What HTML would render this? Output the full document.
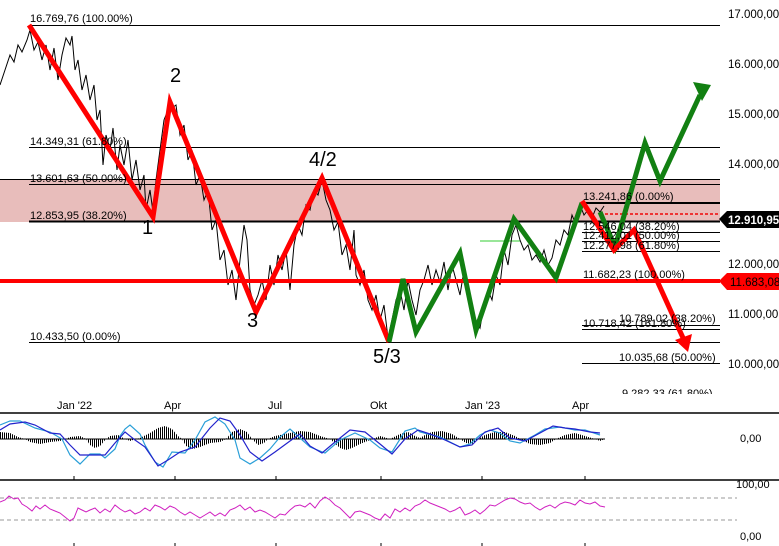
<!DOCTYPE html>
<html><head><meta charset="utf-8"><style>
body{margin:0;background:#fff;}
svg{display:block;font-family:"Liberation Sans",sans-serif;}
</style></head><body>
<svg width="779" height="546" viewBox="0 0 779 546" xmlns="http://www.w3.org/2000/svg">
<defs>
<pattern id="bars" width="2" height="10" patternUnits="userSpaceOnUse"><rect x="0" y="0" width="1" height="10" fill="#000"/></pattern>
</defs>
<rect width="779" height="546" fill="#fff"/>
<rect x="0" y="179" width="720" height="43" fill="#e8bdbb"/>
<g stroke="#000" stroke-width="1">
<line x1="29" y1="25.5" x2="720" y2="25.5"/>
<line x1="29" y1="147.5" x2="720" y2="147.5"/>
<line x1="0" y1="179.5" x2="720" y2="179.5"/>
<line x1="29" y1="184.5" x2="720" y2="184.5"/>
<line x1="29" y1="221.5" x2="720" y2="221.5" stroke-width="2"/>
<line x1="29" y1="342.5" x2="720" y2="342.5"/>
<line x1="582" y1="203" x2="720" y2="203" stroke-width="2"/>
<line x1="582" y1="232.5" x2="720" y2="232.5"/>
<line x1="582" y1="241.5" x2="720" y2="241.5"/>
<line x1="582" y1="251.5" x2="720" y2="251.5"/>
<line x1="582" y1="325.5" x2="720" y2="325.5"/>
<line x1="582" y1="329.5" x2="720" y2="329.5"/>
<line x1="582" y1="363.5" x2="720" y2="363.5"/>
</g>
<line x1="600" y1="214" x2="720" y2="214" stroke="#e33" stroke-width="2" stroke-dasharray="3,2"/>
<line x1="480" y1="241" x2="520" y2="241" stroke="#3c3" stroke-width="1"/>
<polyline fill="none" stroke="#000" stroke-width="1" points="0,85 5,70 10,55 14,62 18,45 22,52 27,40 30,30 34,50 38,42 42,60 46,45 50,70 54,48 58,80 62,55 66,38 70,45 72,36 75,70 78,60 82,90 86,75 90,100 94,85 97,120 100,110 103,165 106,135 110,150 113,128 117,170 120,145 124,165 128,140 132,180 136,160 140,190 144,175 146,210 150,190 153,212 156,180 160,150 164,120 168,110 172,108 176,105 180,135 184,125 188,160 192,150 196,185 200,175 204,200 208,190 212,230 216,220 220,260 224,250 228,285 232,270 236,300 240,260 244,225 247,240 250,290 254,305 258,295 262,280 266,300 270,265 274,285 278,255 282,270 286,250 290,290 294,245 298,225 302,235 306,205 310,210 314,190 318,195 322,180 326,200 330,210 334,230 338,222 342,255 346,245 350,270 354,230 356,275 360,285 364,270 368,300 372,310 376,295 380,320 384,305 388,338 392,320 396,300 400,290 404,310 408,280 412,300 416,315 420,290 424,280 428,265 432,285 436,270 440,282 444,262 448,290 452,265 456,280 460,295 464,270 468,300 472,310 476,320 480,328 484,305 488,290 492,300 496,275 500,285 504,250 508,265 512,235 516,225 520,240 524,250 528,245 532,260 536,255 540,262 544,250 548,265 552,258 556,240 560,245 564,230 568,235 572,215 576,225 580,205 584,215 588,210 592,218 596,208 600,212 604,206"/>
<polyline fill="none" stroke="#f00" stroke-width="5" points="29,25 153,217 170,102 256,312 322,178 389,342"/>
<line x1="0" y1="281" x2="720" y2="281" stroke="#f00" stroke-width="4"/>
<polyline fill="none" stroke="#128012" stroke-width="5" points="389,342 403,279 416,332 460,253 476,330 514,219 556,278 582,203"/>
<polyline fill="none" stroke="#128012" stroke-width="5" points="600,212 615,247 645,143 660,181 700,95"/>
<polygon points="693,82 711,85 702,101" fill="#128012"/>
<polyline fill="none" stroke="#f00" stroke-width="5" points="582,201 614,250 634,230 684,340"/>
<polygon points="675,340 692,334 688,352" fill="#f00"/>
<g font-size="20" fill="#000">
<text x="170" y="82">2</text>
<text x="142" y="234">1</text>
<text x="309" y="166">4/2</text>
<text x="247" y="327">3</text>
<text x="373" y="363">5/3</text>
</g>
<g font-size="11" fill="#000">
<text x="30" y="22">16.769,76 (100.00%)</text>
<text x="30" y="145">14.349,31 (61.80%)</text>
<text x="30" y="182">13.601,63 (50.00%)</text>
<text x="30" y="219">12.853,95 (38.20%)</text>
<text x="30" y="340">10.433,50 (0.00%)</text>
<text x="583" y="200">13.241,86 (0.00%)</text>
<text x="583" y="230">12.546,04 (38.20%)</text>
<text x="583" y="239">12.412,01 (50.00%)</text>
<text x="583" y="249">12.277,98 (61.80%)</text>
<text x="583" y="278">11.682,23 (100.00%)</text>
<text x="619" y="322">10.789,02 (38.20%)</text>
<text x="583" y="327">10.718,42 (161.80%)</text>
<text x="619" y="361">10.035,68 (50.00%)</text>
<text x="622" y="397">9.282,33 (61.80%)</text>
</g>
<rect x="720" y="0" width="59" height="400" fill="#fff"/>
<g font-size="11.5" fill="#000">
<text x="728" y="18">17.000,00</text>
<text x="728" y="68">16.000,00</text>
<text x="728" y="118">15.000,00</text>
<text x="728" y="168">14.000,00</text>
<text x="728" y="268">12.000,00</text>
<text x="728" y="318">11.000,00</text>
<text x="728" y="368">10.000,00</text>
</g>
<polygon points="719,219 727,211 779,211 779,228 727,228" fill="#000"/>
<text x="728" y="224" font-size="11.5" font-weight="bold" fill="#fff">12.910,95</text>
<polygon points="719,281 727,273 779,273 779,290 727,290" fill="#f00"/>
<text x="730" y="286" font-size="11.5" fill="#000">11.683,08</text>
<rect x="0" y="394" width="779" height="19" fill="#fff"/>
<g font-size="11" fill="#000">
<text x="57" y="409">Jan '22</text>
<text x="164" y="409">Apr</text>
<text x="268" y="409">Jul</text>
<text x="370" y="409">Okt</text>
<text x="465" y="409">Jan '23</text>
<text x="572" y="409">Apr</text>
<text x="740" y="442">0,00</text>
<text x="736" y="488">100,00</text>
<text x="740" y="540">0,00</text>
</g>
<line x1="0" y1="413" x2="779" y2="413" stroke="#000" stroke-width="1.5"/>
<line x1="0" y1="480" x2="779" y2="480" stroke="#000" stroke-width="1.5"/>
<g stroke="#000">
<line x1="74" y1="476" x2="74" y2="480"/><line x1="175" y1="476" x2="175" y2="480"/><line x1="276" y1="476" x2="276" y2="480"/><line x1="381" y1="476" x2="381" y2="480"/><line x1="482" y1="476" x2="482" y2="480"/><line x1="585" y1="476" x2="585" y2="480"/>
<line x1="74" y1="543" x2="74" y2="546"/><line x1="175" y1="543" x2="175" y2="546"/><line x1="276" y1="543" x2="276" y2="546"/><line x1="381" y1="543" x2="381" y2="546"/><line x1="482" y1="543" x2="482" y2="546"/><line x1="585" y1="543" x2="585" y2="546"/>
</g>
<path fill="url(#bars)" d="M0,439 L0,432 L10,433 L18,437 L25,439 L30,442 L40,444 L50,442 L60,441 L66,439 L70,437 L80,436 L86,439 L90,445 L95,448 L100,446 L106,439 L110,436 L118,435 L125,439 L130,441 L136,439 L140,438 L150,433 L158,428 L165,426 L172,429 L178,436 L182,439 L186,446 L193,449 L200,447 L210,443 L220,442 L226,439 L232,432 L240,429 L247,432 L252,439 L258,445 L264,443 L268,439 L275,436 L285,434 L300,431 L310,432 L320,436 L330,439 L340,448 L346,450 L352,448 L360,444 L370,440 L380,436 L390,439 L400,434 L408,432 L415,436 L420,438 L425,435 L432,432 L442,431 L452,434 L460,439 L466,443 L472,444 L478,439 L485,435 L495,432 L505,432 L515,436 L520,439 L530,444 L540,445 L550,443 L556,439 L565,435 L575,433 L585,436 L595,439 L600,441 L605,439 Z"/>
<line x1="0" y1="439" x2="605" y2="439" stroke="#000"/>
<polyline fill="none" stroke="#2a9fd8" stroke-width="1.2" points="0,425 10,421 20,421 35,428 50,432 62,439 70,455 80,464 90,454 100,454 105,458 115,449 120,436 125,429 130,425 140,434 145,445 155,462 163,467 172,452 185,453 195,440 205,422 215,417 225,424 235,440 240,458 250,464 260,458 270,449 280,437 290,429 300,438 310,447 325,453 340,440 355,433 370,440 380,448 392,452 405,431 415,428 420,432 440,437 450,442 460,447 470,444 480,435 490,430 500,433 510,441 520,443 535,435 545,429 560,427 575,430 585,430 600,435"/>
<polyline fill="none" stroke="#2222cc" stroke-width="1.2" points="0,430 10,424 25,422 35,425 50,433 60,434 70,445 80,455 92,455 105,455 115,443 125,432 135,440 145,447 158,466 168,460 180,452 195,447 210,428 220,418 230,421 240,435 250,452 262,461 275,452 290,441 300,434 310,446 322,453 335,442 350,430 365,432 380,444 392,454 405,439 418,430 430,434 445,440 460,447 472,445 485,432 498,428 510,438 525,441 540,433 553,426 565,428 575,429 590,432 600,433"/>
<line x1="0" y1="498" x2="737" y2="498" stroke="#999" stroke-dasharray="4,3"/>
<line x1="0" y1="520" x2="737" y2="520" stroke="#999" stroke-dasharray="4,3"/>
<polyline fill="none" stroke="#d020c0" stroke-width="1" points="0,502 5,500 9,496 14,499 18,498 22,504 27,507 32,511 36,506 40,509 45,505 50,509 55,511 60,513 65,517 70,521 74,518 78,508 82,510 86,512 90,510 95,508 100,513 105,509 110,512 115,505 120,509 125,512 130,510 135,514 140,512 145,508 150,511 155,505 160,507 165,510 170,506 175,508 180,512 185,515 190,512 195,515 200,518 205,515 210,512 215,516 220,513 225,516 230,510 235,508 240,505 245,510 250,507 255,512 260,510 265,512 270,515 275,518 280,514 285,515 290,510 295,506 300,505 305,507 310,503 315,508 320,501 325,497 330,500 335,505 340,508 345,513 350,518 355,512 360,511 365,513 370,515 375,518 380,520 385,514 390,518 395,509 400,512 405,508 410,511 415,506 420,504 425,500 430,503 435,505 440,507 445,509 450,512 455,510 460,507 465,515 470,513 475,510 480,514 485,510 490,505 495,506 500,503 505,500 510,498 515,499 520,502 525,504 530,503 535,507 540,510 545,507 550,505 555,508 560,504 565,502 570,503 575,505 580,500 585,503 590,504 595,502 600,506 605,507"/>
</svg>
</body></html>
